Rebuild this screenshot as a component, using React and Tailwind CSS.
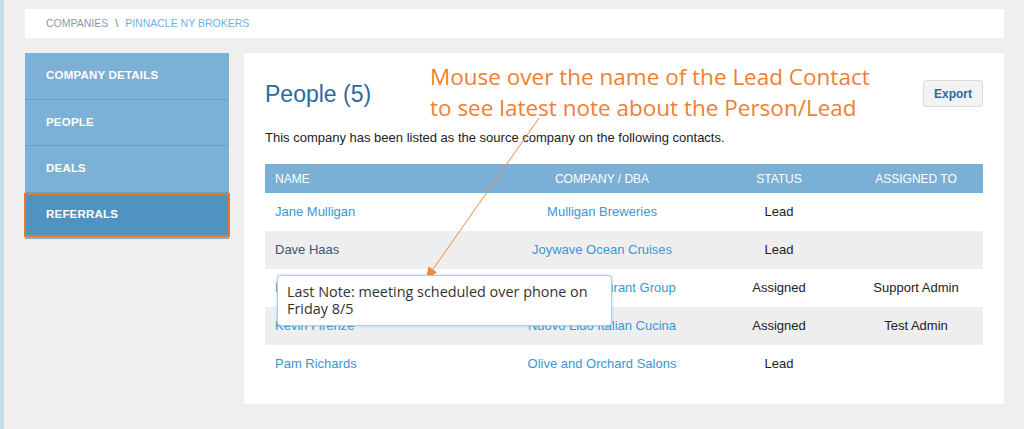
import React from "react";

const rows = [
  { name: "Jane Mulligan", company: "Mulligan Breweries", status: "Lead", assigned: "" },
  { name: "Dave Haas", company: "Joywave Ocean Cruises", status: "Lead", assigned: "", dark: true },
  { name: "Marco Bellini", company: "Capital Restaurant Group", status: "Assigned", assigned: "Support Admin" },
  { name: "Kevin Firenze", company: "Nuovo Lido Italian Cucina", status: "Assigned", assigned: "Test Admin" },
  { name: "Pam Richards", company: "Olive and Orchard Salons", status: "Lead", assigned: "" },
];

const navItems = ["COMPANY DETAILS", "PEOPLE", "DEALS"];

function Sidebar() {
  return (
    <div className="w-[204px] shrink-0 self-start bg-[#7cb0d4] pb-[2px]">
      {navItems.map((item) => (
        <div
          key={item}
          className="flex h-[46.5px] items-center border-b border-[#6a9fc5] pl-[21px] text-[11.5px] font-bold tracking-[0.2px] text-white"
        >
          {item}
        </div>
      ))}
      <div className="-mx-[1px] flex h-[44px] items-center border-2 border-[#e8792b] bg-[#4f93c0] pl-[20px] text-[11.5px] font-bold tracking-[0.2px] text-white">
        REFERRALS
      </div>
    </div>
  );
}

function PeopleTable() {
  return (
    <div className="mt-[18px] w-full text-[13px]">
      <div className="flex h-[29px] items-center bg-[#7ab0d5] text-[12px] text-white">
        <div className="w-[230px] pl-[10px]">NAME</div>
        <div className="w-[214px] text-center">COMPANY / DBA</div>
        <div className="w-[140px] text-center">STATUS</div>
        <div className="w-[134px] text-center">ASSIGNED TO</div>
      </div>
      {rows.map((r, i) => (
        <div
          key={r.name}
          className={`flex h-[38px] items-center ${i % 2 === 1 ? "bg-[#eeeeee]" : "bg-white"}`}
        >
          <div className={`w-[230px] pl-[10px] ${r.dark ? "text-[#3d566b]" : "text-[#3b97d3]"}`}>{r.name}</div>
          <div className="w-[214px] text-center text-[#3b97d3]">{r.company}</div>
          <div className="w-[140px] text-center text-[#222]">{r.status}</div>
          <div className="w-[134px] text-center text-[#222]">{r.assigned}</div>
        </div>
      ))}
    </div>
  );
}

export default function App() {
  return (
    <div
      className="relative flex h-[429px] w-[1024px] overflow-hidden bg-[#efefef]"
      style={{ fontFamily: '"Liberation Sans", Arial, sans-serif' }}
    >
      <div className="w-[4px] shrink-0 bg-[#c7dae7]" />
      <div className="flex flex-1 flex-col pl-[21px] pr-[20px] pt-[9px]">
        {/* breadcrumb */}
        <div className="flex h-[29px] items-center bg-white pl-[21px] text-[10.5px]">
          <span className="text-[#8a98a6]">COMPANIES</span>
          <span className="mx-[7px] text-[#6b7a88]">\</span>
          <span className="text-[#6cb2ea]">PINNACLE NY BROKERS</span>
        </div>

        <div className="mt-[15px] flex gap-[15px]">
          <Sidebar />
          <div className="h-[351px] flex-1 bg-white px-[21px] pt-[27px]">
            <div className="flex h-[27px] items-start justify-between">
              <h1 className="mt-[3px] text-[23px] leading-[23px] text-[#2a6a9e]">People (5)</h1>
              <button className="h-[27px] w-[60px] rounded-[3px] border border-[#dcdcdc] bg-[#f3f3f3] text-[12px] font-bold text-[#2a6a9e]">
                Export
              </button>
            </div>
            <p className="mt-[22px] text-[13px] leading-[17px] text-[#222]">
              This company has been listed as the source company on the following contacts.
            </p>
            <PeopleTable />
          </div>
        </div>
      </div>

      {/* annotation overlay */}
      <div
        className="absolute left-[430px] top-[61px] text-[22.5px] leading-[31px] text-[#f07f32]"
        style={{ fontFamily: '"Open Sans", sans-serif' }}
      >
        <div>Mouse over the name of the Lead Contact</div>
        <div>to see latest note about the Person/Lead</div>
      </div>
      <svg className="absolute left-0 top-0" width="1024" height="429" viewBox="0 0 1024 429">
        <line x1="539" y1="118" x2="432.5" y2="270" stroke="#f0883e" strokeWidth="1" />
        <polygon points="426,279 437,272.5 428.5,266.5" fill="#f0883e" />
      </svg>

      {/* tooltip */}
      <div
        className="absolute left-[277px] top-[275px] h-[51px] w-[335px] rounded-[4px] border border-[#a9cfea] bg-white px-[9px] pt-[7px] text-[14.4px] leading-[17px] text-[#333] shadow-[0_0_3px_rgba(100,160,210,0.5)]"
        style={{ fontFamily: '"Open Sans", sans-serif' }}
      >
        Last Note: meeting scheduled over phone on
        <br />
        Friday 8/5
      </div>
    </div>
  );
}
